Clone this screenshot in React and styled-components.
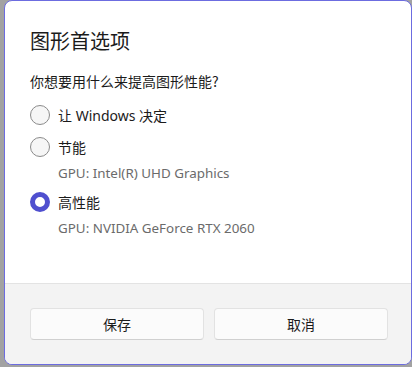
import React, { useState } from "react";
import styled, { createGlobalStyle } from "styled-components";

const Global = createGlobalStyle`
  html, body { margin: 0; padding: 0; }
  body {
    background: #a2a2a2;
    font-family: "Noto Sans", "Noto Sans CJK SC", sans-serif;
    overflow: hidden;
  }
`;

const Page = styled.div`
  width: 412px;
  height: 367px;
  padding-left: 4px;
  box-sizing: border-box;
`;

const Dialog = styled.div`
  width: 408px;
  height: 365px;
  box-sizing: border-box;
  border: 1px solid #6c6ce0;
  border-radius: 8px;
  background: #ffffff;
  display: flex;
  flex-direction: column;
  overflow: hidden;
`;

const Body = styled.div`
  flex: 1;
  padding: 25px 25px 0 25px;
  display: flex;
  flex-direction: column;
`;

const Title = styled.h1`
  margin: 0;
  font-size: 20px;
  font-weight: 400;
  line-height: 30px;
  color: #1b1b1b;
  font-family: "Noto Sans CJK SC", sans-serif;
`;

const Question = styled.p`
  margin: 15px 0 0 0;
  font-size: 14px;
  line-height: 20px;
  color: #1b1b1b;
  font-family: "Noto Sans CJK SC", sans-serif;
`;

const Options = styled.div`
  display: flex;
  flex-direction: column;
  margin-top: 13px;
`;

const Option = styled.label`
  display: flex;
  flex-direction: column;
  margin-bottom: ${(p) => (p.$hasSub ? "8px" : "10px")};
  cursor: pointer;
`;

const Row = styled.div`
  display: flex;
  align-items: center;
  gap: 8px;
  height: 22px;
`;

const Circle = styled.span`
  width: 20px;
  height: 20px;
  box-sizing: border-box;
  border-radius: 50%;
  border: ${(p) => (p.$checked ? "5px solid #4f4fcf" : "1px solid #8b8b8b")};
  background: ${(p) => (p.$checked ? "#ffffff" : "#f6f6f6")};
  flex: none;
`;

const Label = styled.span`
  font-size: 14px;
  color: #1b1b1b;
  font-family: "Noto Sans", "Noto Sans CJK SC", sans-serif;
`;

const Sub = styled.span`
  margin-left: 28px;
  margin-top: 5px;
  font-size: 13.4px;
  line-height: 20px;
  color: #6b6b6b;
  font-family: "Noto Sans", "Noto Sans CJK SC", sans-serif;
`;

const Footer = styled.div`
  height: 81px;
  flex: none;
  background: #f3f3f3;
  border-top: 1px solid #e3e3e3;
  display: grid;
  grid-template-columns: 174px 174px;
  gap: 10px;
  padding: 24px 0 0 25px;
  box-sizing: border-box;
  align-items: start;
`;

const Button = styled.button`
  height: 32px;
  border: 1px solid #e2e2e2;
  border-bottom-color: #d0d0d0;
  border-radius: 4px;
  background: #fbfbfb;
  font-size: 14px;
  color: #1b1b1b;
  font-family: "Noto Sans CJK SC", sans-serif;
  padding: 0;
`;

const options = [
  { label: "让 Windows 决定" },
  { label: "节能", sub: "GPU: Intel(R) UHD Graphics" },
  { label: "高性能", sub: "GPU: NVIDIA GeForce RTX 2060" },
];

export default function App() {
  const [sel, setSel] = useState(2);
  return (
    <Page>
      <Global />
      <Dialog>
        <Body>
          <Title>图形首选项</Title>
          <Question>你想要用什么来提高图形性能?</Question>
          <Options>
            {options.map((o, i) => (
              <Option key={i} $hasSub={!!o.sub} onClick={() => setSel(i)}>
                <Row>
                  <Circle $checked={sel === i} />
                  <Label>{o.label}</Label>
                </Row>
                {o.sub && <Sub>{o.sub}</Sub>}
              </Option>
            ))}
          </Options>
        </Body>
        <Footer>
          <Button>保存</Button>
          <Button>取消</Button>
        </Footer>
      </Dialog>
    </Page>
  );
}
